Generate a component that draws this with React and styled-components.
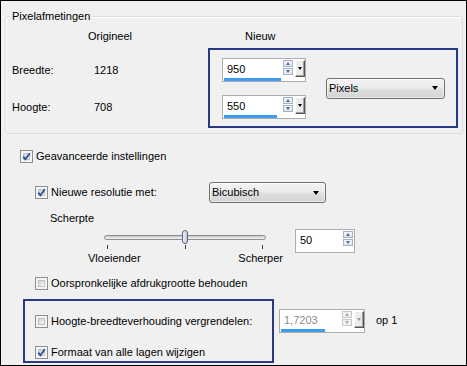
import React from 'react';
import styled, { createGlobalStyle } from 'styled-components';

const GlobalStyle = createGlobalStyle`
  body {
    margin: 0;
    font-family: "Liberation Sans", Arial, sans-serif;
    font-size: 11px;
    color: #000;
  }
`;

const Frame = styled.div`
  width: 467px;
  height: 366px;
  box-sizing: border-box;
  border: 1px solid #000;
  background: #f0f0f0;
  line-height: 13px;
  display: flex;
  flex-direction: column;
`;

const Group = styled.div`
  position: relative;
  box-sizing: border-box;
  width: 458px;
  height: 118px;
  margin: 15px 0 0 4px;
  padding: 0 4px 0 6px;
  border: 1px solid #d5dfe5;
  border-radius: 3px;
  box-shadow: inset 1px 1px 0 #fff;
`;

const Legend = styled.span`
  position: absolute;
  top: -7px;
  left: 4px;
  padding: 0 2px;
  background: #f0f0f0;
`;

const HeaderRow = styled.div`
  display: grid;
  grid-template-columns: 157px 1fr;
  padding-left: 76px;
  margin-top: 13px;
  height: 13px;
`;

const MainRow = styled.div`
  display: flex;
  margin-top: 5px;
`;

const LabelGrid = styled.div`
  width: 196px;
  display: grid;
  grid-template-columns: 82px 1fr;
  grid-auto-rows: 24px;
  row-gap: 13px;
  align-items: center;
  align-content: start;
  padding-top: 10px;
  box-sizing: border-box;
`;

const Highlight = styled.div`
  box-sizing: border-box;
  width: ${p => p.$w}px;
  height: ${p => p.$h}px;
  border: 2px solid #2b3984;
  flex: none;
`;

const SizeBox = styled(Highlight)`
  display: flex;
  align-items: center;
  padding-left: 12px;
`;

const LockBox = styled(Highlight)`
  display: flex;
  flex-direction: column;
  gap: 18px;
  padding: 14px 0 0 10px;
`;

const SpinColumn = styled.div`
  display: flex;
  flex-direction: column;
  gap: 13px;
  align-self: flex-start;
  margin-top: 8px;
`;

/* spin box */
const SpinFrame = styled.div`
  box-sizing: border-box;
  width: ${p => p.$w}px;
  height: 24px;
  border: 1px solid #abadb3;
  background: #fff;
  display: flex;
  align-items: flex-start;
  padding: 1px 0 0 1px;
  flex: none;
`;

const Field = styled.div`
  flex: 1;
  display: flex;
  flex-direction: column;
  padding-top: 2px;
`;

const Value = styled.span`
  padding-left: 3px;
  height: 15px;
  line-height: 15px;
  color: ${p => (p.$disabled ? '#8b8b8b' : '#000')};
`;

const Bar = styled.div`
  height: 3px;
  margin-top: 1px;
  background: #3d9bf0;
`;

const Arrows = styled.div`
  display: flex;
  flex-direction: column;
  gap: 1px;
  margin-right: ${p => p.$gap}px;
`;

const ArrowBtn = styled.div`
  box-sizing: border-box;
  width: 10px;
  height: 7px;
  border: 1px solid ${p => (p.$disabled ? '#c8c8c8' : '#a7b3c5')};
  background: ${p => (p.$disabled ? '#f2f2f2' : 'linear-gradient(#f4f7fb, #dde5f0)')};
  display: flex;
  align-items: center;
  justify-content: center;
  &::after {
    content: '';
    border-left: 2.5px solid transparent;
    border-right: 2.5px solid transparent;
    ${p => (p.$down ? 'border-top' : 'border-bottom')}: 3px solid ${p => (p.$disabled ? '#a9a9a9' : '#4f6b9a')};
  }
`;

const DropBtn = styled.div`
  box-sizing: border-box;
  width: 10px;
  height: 17px;
  background: #ececec;
  border-top: 1px solid #fff;
  border-left: 1px solid #fff;
  border-right: 1px solid #555;
  border-bottom: 1px solid #555;
  box-shadow: inset -1px -1px 0 #a0a0a0;
  display: flex;
  align-items: center;
  justify-content: center;
  &::after {
    content: '';
    border-left: 2.5px solid transparent;
    border-right: 2.5px solid transparent;
    border-top: 3px solid ${p => (p.$disabled ? '#9a9a9a' : '#000')};
  }
`;

function SpinBox({ value, width, bar, drop, disabled, className }) {
  return (
    <SpinFrame $w={width} className={className}>
      <Field>
        <Value $disabled={disabled}>{value}</Value>
        {bar ? <Bar style={{ width: bar }} /> : null}
      </Field>
      <Arrows $gap={drop ? 2 : 1}>
        <ArrowBtn $disabled={disabled} />
        <ArrowBtn $down $disabled={disabled} />
      </Arrows>
      {drop ? <DropBtn $disabled={disabled} /> : null}
    </SpinFrame>
  );
}

/* combo */
const Combo = styled.div`
  box-sizing: border-box;
  width: ${p => p.$w}px;
  height: 21px;
  margin-left: ${p => p.$ml || 0}px;
  border: 1px solid #707070;
  border-radius: 3px;
  background: linear-gradient(#f3f3f3 0%, #ececec 45%, #dfdfdf 55%, #d3d3d3 100%);
  box-shadow: inset 0 0 0 1px rgba(255, 255, 255, 0.55);
  display: flex;
  align-items: center;
  justify-content: space-between;
  padding: 0 6px 0 2px;
  flex: none;
  &::after {
    content: '';
    border-left: 3.5px solid transparent;
    border-right: 3.5px solid transparent;
    border-top: 4px solid #000;
  }
`;

/* checkbox */
const CheckRow = styled.div`
  display: flex;
  align-items: center;
  gap: 3px;
  height: 13px;
  margin-left: ${p => p.$ml || 0}px;
  margin-top: ${p => p.$mt || 0}px;
`;

const Box = styled.span`
  box-sizing: border-box;
  width: 13px;
  height: 13px;
  border: 1px solid #8e8f8f;
  background: #f4f4f4;
  padding: 2px;
  display: flex;
  flex: none;
`;

const BoxInner = styled.span`
  flex: 1;
  position: relative;
  background: linear-gradient(135deg, #cdd1d7, #f7f7f7);
  border: 1px solid #bfc3c8;
  svg {
    position: absolute;
    left: -3px;
    top: -3px;
  }
`;

function Check({ checked, label, ...rest }) {
  return (
    <CheckRow {...rest}>
      <Box>
        <BoxInner>
          {checked ? (
            <svg width="11" height="11" viewBox="0 0 11 11">
              <path d="M2.3 5.6 L4.4 8.2 L8.9 2.2" fill="none" stroke="#2a4d98" strokeWidth="1.8" />
            </svg>
          ) : null}
        </BoxInner>
      </Box>
      <span>{label}</span>
    </CheckRow>
  );
}

/* lower section */
const Section = styled.div`
  display: flex;
  flex-direction: column;
  padding-left: 19px;
`;

const OptionRow = styled.div`
  display: grid;
  grid-template-columns: 174px auto;
  align-items: center;
  height: 21px;
  margin: 19px 0 0 15px;
`;

const Caption = styled.div`
  margin: 9px 0 0 30px;
  height: 13px;
`;

const SliderRow = styled.div`
  display: flex;
  align-items: flex-start;
  margin: 4px 0 0 68px;
`;

const SliderBlock = styled.div`
  width: 195px;
  display: flex;
  flex-direction: column;
  margin-top: 1px;
`;

const TrackArea = styled.div`
  position: relative;
  height: 14px;
  width: 162px;
  margin-left: 16px;
  display: flex;
  align-items: center;
`;

const Track = styled.div`
  flex: 1;
  box-sizing: border-box;
  height: 5px;
  border: 1px solid #8e8e8e;
  border-radius: 3px;
  background: linear-gradient(#c9c9c9, #f4f4f4);
`;

const Thumb = styled.div`
  position: absolute;
  top: 0;
  box-sizing: border-box;
  width: 6px;
  height: 14px;
  margin-left: -3px;
  border: 1px solid #5d6478;
  border-radius: 3px;
  background: linear-gradient(90deg, #eef0f8, #c3c7dc);
`;

const TickRow = styled.div`
  display: flex;
  justify-content: space-between;
  width: 156px;
  margin: 1px 0 0 19px;
`;

const Tick = styled.div`
  width: 1px;
  height: 4px;
  background: #404040;
`;

const SliderLabels = styled.div`
  display: flex;
  justify-content: space-between;
  margin-top: 3px;
`;

const LockRow = styled.div`
  display: flex;
  align-items: flex-start;
  margin: 9px 0 0 3px;
`;

const Gap = styled.div`
  margin-left: ${p => p.$l}px;
  margin-top: ${p => p.$t}px;
`;

export default function App() {
  const sharpness = 50;
  return (
    <>
      <GlobalStyle />
      <Frame>
        <Group>
          <Legend>Pixelafmetingen</Legend>
          <HeaderRow>
            <span>Origineel</span>
            <span>Nieuw</span>
          </HeaderRow>
          <MainRow>
            <LabelGrid>
              <span>Breedte:</span>
              <span>1218</span>
              <span>Hoogte:</span>
              <span>708</span>
            </LabelGrid>
            <SizeBox $w={250} $h={80}>
              <SpinColumn>
                <SpinBox value="950" width={84} bar={57} drop />
                <SpinBox value="550" width={84} bar={53} drop />
              </SpinColumn>
              <Combo $w={119} $ml={20}>Pixels</Combo>
            </SizeBox>
          </MainRow>
        </Group>

        <Section>
          <Check checked label="Geavanceerde instellingen" $mt={16} />
          <OptionRow>
            <Check checked label="Nieuwe resolutie met:" />
            <Combo $w={117}>Bicubisch</Combo>
          </OptionRow>
          <Caption>Scherpte</Caption>
          <SliderRow>
            <SliderBlock>
              <TrackArea>
                <Track />
                <Thumb style={{ left: `${sharpness}%` }} />
              </TrackArea>
              <TickRow>
                <Tick />
                <Tick />
                <Tick />
              </TickRow>
              <SliderLabels>
                <span>Vloeiender</span>
                <span>Scherper</span>
              </SliderLabels>
            </SliderBlock>
            <Gap $l={12} $t={0}>
              <SpinBox value={String(sharpness)} width={60} />
            </Gap>
          </SliderRow>
          <Check label="Oorspronkelijke afdrukgrootte behouden" $ml={15} $mt={12} />
          <LockRow>
            <LockBox $w={251} $h={64}>
              <Check label="Hoogte-breedteverhouding vergrendelen:" />
              <Check checked label="Formaat van alle lagen wijzigen" />
            </LockBox>
            <Gap $l={5} $t={10}>
              <SpinBox value="1,7203" width={86} bar={44} drop disabled />
            </Gap>
            <Gap $l={11} $t={15}>op 1</Gap>
          </LockRow>
        </Section>
      </Frame>
    </>
  );
}
